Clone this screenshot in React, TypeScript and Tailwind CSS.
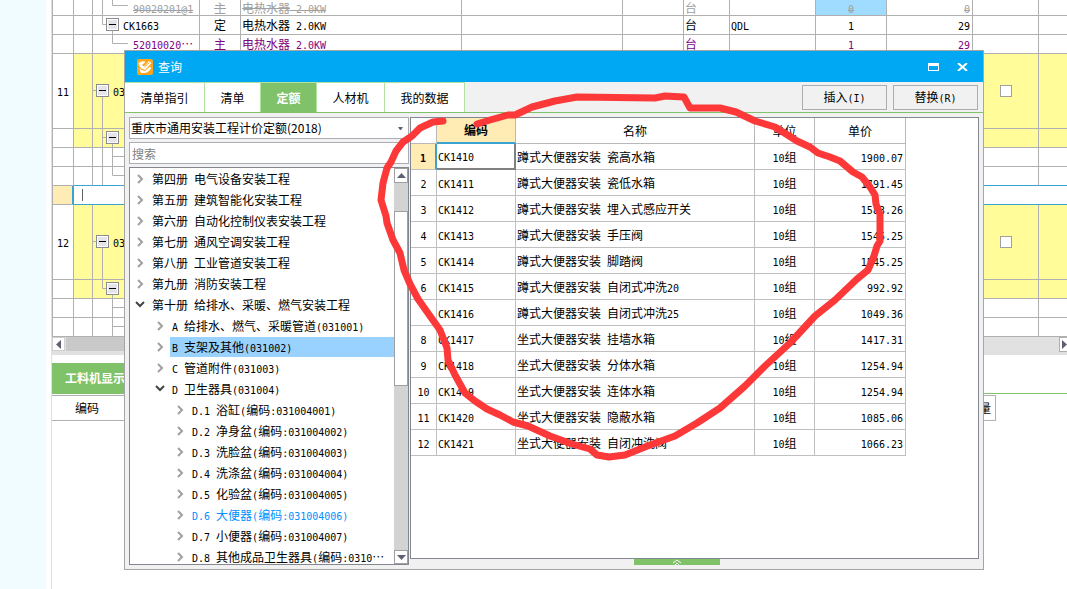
import { useState } from 'react';

interface GridRow {
  no?: string;
  height: string;
  filled?: boolean;
  editing?: boolean;
  tone?: 'muted' | 'material';
  lines?: string;
  box?: [number, number];
  indent?: string;
  code?: string;
  kind?: string;
  name?: string;
  unit?: string;
  formula?: string;
  qty?: string;
  total?: string;
  checkable?: boolean;
}

const GRID_COLS = [
  'w-[21px]',
  'w-[19px]',
  'w-[107px]',
  'w-[41px]',
  'w-[221px]',
  'w-[161px]',
  'w-[61px]',
  'w-[46px]',
  'w-[86px]',
  'w-[71px]',
  'w-[86px]',
  'w-[66px]',
  '',
];

const GRID_ROWS: GridRow[] = [
  {
    height: 'h-4',
    tone: 'muted',
    lines: 'M9.5 0V15M19.5 0V5.5H35',
    indent: 'pl-10',
    code: '90020201@1',
    kind: '主',
    name: '电热水器 2.0KW',
    unit: '台',
    qty: '0',
    total: '0',
  },
  {
    height: 'h-[19px]',
    lines: 'M9.5 0V8.5H13M19.5 15V18',
    box: [13, 2],
    indent: 'pl-[30px]',
    code: 'CK1663',
    kind: '定',
    name: '电热水器 2.0KW',
    unit: '台',
    formula: 'QDL',
    qty: '1',
    total: '29',
  },
  {
    height: 'h-[19px]',
    tone: 'material',
    lines: 'M19.5 0V8.5H35',
    indent: 'pl-10',
    code: '52010020…',
    kind: '主',
    name: '电热水器 2.0KW',
    unit: '台',
    qty: '1',
    total: '29',
  },
  {
    no: '11',
    height: 'h-[75px]',
    filled: true,
    lines: 'M0 36.5H3M9.5 43V74',
    box: [3, 30],
    indent: 'pl-5',
    code: '03',
    checkable: true,
  },
  { height: 'h-[19px]', filled: true, lines: 'M9.5 0V18M9.5 8.5H13M19.5 15V18', box: [13, 2] },
  { height: 'h-[19px]', lines: 'M9.5 0V18M19.5 0V18M19.5 8.5H60' },
  { height: 'h-[19px]', lines: 'M9.5 0V18M19.5 0V8.5H60' },
  { height: 'h-[19px]', editing: true },
  {
    no: '12',
    height: 'h-[75px]',
    filled: true,
    lines: 'M0 36.5H3M9.5 43V74',
    box: [3, 30],
    indent: 'pl-5',
    code: '03',
    checkable: true,
  },
  { height: 'h-[19px]', filled: true, lines: 'M9.5 0V8.5H13M19.5 15V18', box: [13, 2] },
  { height: 'h-[19px]', lines: 'M19.5 0V18M19.5 8.5H60' },
  { height: 'h-[19px]', lines: 'M19.5 0V18M19.5 8.5H60' },
];

const TABS = [
  { label: '清单指引', width: 'w-20' },
  { label: '清单', width: 'w-14' },
  { label: '定额', width: 'w-14' },
  { label: '人材机', width: 'w-[68px]' },
  { label: '我的数据', width: 'w-20' },
];

interface TreeNode {
  level: 0 | 1 | 2;
  label: string;
  open?: boolean;
  selected?: boolean;
  active?: boolean;
}

const TREE: TreeNode[] = [
  { level: 0, label: '第四册 电气设备安装工程' },
  { level: 0, label: '第五册 建筑智能化安装工程' },
  { level: 0, label: '第六册 自动化控制仪表安装工程' },
  { level: 0, label: '第七册 通风空调安装工程' },
  { level: 0, label: '第八册 工业管道安装工程' },
  { level: 0, label: '第九册 消防安装工程' },
  { level: 0, label: '第十册 给排水、采暖、燃气安装工程', open: true },
  { level: 1, label: 'A 给排水、燃气、采暖管道(031001)' },
  { level: 1, label: 'B 支架及其他(031002)', selected: true },
  { level: 1, label: 'C 管道附件(031003)' },
  { level: 1, label: 'D 卫生器具(031004)', open: true },
  { level: 2, label: 'D.1 浴缸(编码:031004001)' },
  { level: 2, label: 'D.2 净身盆(编码:031004002)' },
  { level: 2, label: 'D.3 洗脸盆(编码:031004003)' },
  { level: 2, label: 'D.4 洗涤盆(编码:031004004)' },
  { level: 2, label: 'D.5 化验盆(编码:031004005)' },
  { level: 2, label: 'D.6 大便器(编码:031004006)', active: true },
  { level: 2, label: 'D.7 小便器(编码:031004007)' },
  { level: 2, label: 'D.8 其他成品卫生器具(编码:0310…' },
];

const INDENTS = ['pl-1', 'pl-6', 'pl-11'];

const QUOTAS = [
  ['CK1410', '蹲式大便器安装 瓷高水箱', '1900.07'],
  ['CK1411', '蹲式大便器安装 瓷低水箱', '1791.45'],
  ['CK1412', '蹲式大便器安装 埋入式感应开关', '1583.26'],
  ['CK1413', '蹲式大便器安装 手压阀', '1545.25'],
  ['CK1414', '蹲式大便器安装 脚踏阀', '1545.25'],
  ['CK1415', '蹲式大便器安装 自闭式冲洗20', '992.92'],
  ['CK1416', '蹲式大便器安装 自闭式冲洗25', '1049.36'],
  ['CK1417', '坐式大便器安装 挂墙水箱', '1417.31'],
  ['CK1418', '坐式大便器安装 分体水箱', '1254.94'],
  ['CK1419', '坐式大便器安装 连体水箱', '1254.94'],
  ['CK1420', '坐式大便器安装 隐蔽水箱', '1085.06'],
  ['CK1421', '坐式大便器安装 自闭冲洗阀', '1066.23'],
];

// Latin runs are half the width of a Chinese character
function Txt({ children, struck }: { children: string; struck?: boolean }) {
  const parts = children.split(/([\x20-\x7e]+)/).filter(Boolean);
  return (
    <>
      {parts.map((part, i) =>
        /^[\x20-\x7e]/.test(part) ? (
          <span
            key={i}
            className={`font-['DejaVu_Sans_Mono',monospace] text-[10px] leading-none whitespace-pre ${
              struck ? 'line-through' : ''
            }`}
          >
            {part}
          </span>
        ) : (
          <span key={i} className={struck ? 'line-through' : ''}>
            {part}
          </span>
        ),
      )}
    </>
  );
}

function TreeLines({ lines, box }: { lines: string; box?: [number, number] }) {
  return (
    <svg width="106" height="18" className="absolute top-0 left-0 overflow-visible">
      <path d={lines} fill="none" stroke="#b0b0b0" />
      {box && (
        <g transform={`translate(${box[0]} ${box[1]})`}>
          <rect x="0.5" y="0.5" width="12" height="12" fill="#e4e4ea" stroke="#8c8c8c" />
          <rect x="1.5" y="1.5" width="10" height="10" fill="none" stroke="#fff" />
          <path d="M3 6.5H10" stroke="#000" />
        </g>
      )}
    </svg>
  );
}

function Triangle({ dir }: { dir: 'up' | 'down' | 'left' | 'right' }) {
  const d = {
    up: 'M0 7L4.500 2L9 7Z',
    down: 'M0 2L4.500 7L9 2Z',
    left: 'M7 0L2 4.500L7 9Z',
    right: 'M2 0L7 4.500L2 9Z',
  }[dir];
  return (
    <svg width="9" height="9" viewBox="0 0 9 9" className="shrink-0">
      <path d={d} fill="#5f6172" />
    </svg>
  );
}

function ProjectGrid() {
  return (
    <table className="w-full table-fixed border-separate border-spacing-0 border-l border-[#b0b0b0] leading-[14px]">
      <colgroup>
        {GRID_COLS.map((w, i) => (
          <col key={i} className={w} />
        ))}
      </colgroup>
      <tbody>
        {GRID_ROWS.map((row, r) => {
          const struck = row.tone === 'muted';
          const tone = struck
            ? 'text-[#a0a0a0]'
            : row.tone === 'material'
              ? 'text-[#800080]'
              : 'text-black';
          const blue = row.editing || GRID_ROWS[r + 1]?.editing;
          const line = `border-b whitespace-nowrap overflow-hidden p-0 ${
            blue ? 'border-b-[#3ba3d0]' : 'border-b-[#b0b0b0]'
          } ${row.editing ? '' : 'border-r border-r-[#b0b0b0]'} ${row.filled ? 'bg-[#fffc99]' : ''}`;
          return (
            <tr key={r} className={`${row.height} ${tone}`}>
              <td
                className={`border-b border-b-[#b0b0b0] p-0 text-center ${
                  row.editing
                    ? 'bg-[#ffecb5] border-r-2 border-r-[#3ba3d0]'
                    : 'border-r border-r-[#b0b0b0]'
                }`}
              >
                {row.no && <Txt>{row.no}</Txt>}
              </td>
              <td className={line}>
                {row.editing && <div className="ml-2 h-3 border-l border-[#606060]" />}
              </td>
              <td className={`${line} relative ${row.indent ?? ''}`}>
                {row.lines && <TreeLines lines={row.lines} box={row.box} />}
                {row.code && <Txt struck={struck}>{row.code}</Txt>}
              </td>
              <td className={`${line} text-center`}>
                {row.kind && <Txt struck={struck}>{row.kind}</Txt>}
              </td>
              <td className={`${line} pl-px`}>
                {row.name && <Txt struck={struck}>{row.name}</Txt>}
              </td>
              <td className={line} />
              <td className={line} />
              <td className={`${line} pl-px`}>{row.unit && <Txt>{row.unit}</Txt>}</td>
              <td className={`${line} pl-px`}>{row.formula && <Txt>{row.formula}</Txt>}</td>
              <td className={`${line} text-center ${r === 0 ? 'bg-[#9fdcff]' : ''}`}>
                {row.qty && <Txt struck={struck}>{row.qty}</Txt>}
              </td>
              <td className={`${line} pr-[2px] text-right`}>
                {row.total && <Txt struck={struck}>{row.total}</Txt>}
              </td>
              <td className={`${line} text-center`}>
                {row.checkable && (
                  <input
                    type="checkbox"
                    aria-label={`选择第${row.no}行`}
                    className="block mx-auto w-3 h-3 appearance-none border border-[#a0a0a0] bg-white checked:bg-[#3ba3d0]"
                  />
                )}
              </td>
              <td className={`${line} border-r-0`} />
            </tr>
          );
        })}
      </tbody>
    </table>
  );
}

function DetailPane() {
  return (
    <>
      <div className="h-[18px] flex items-start justify-between bg-[#e1e1e1]">
        <button
          type="button"
          aria-label="向左滚动"
          className="w-[13px] h-[14px] flex items-center justify-center bg-white border border-[#d0d0d0]"
        >
          <Triangle dir="left" />
        </button>
        <div className="w-[740px] h-[14px] ml-px mr-auto bg-[#c9c9c9]" />
        <button
          type="button"
          aria-label="向右滚动"
          className="w-2 h-[15px] flex items-center overflow-hidden bg-white border-l border-y border-[#b0b0b0]"
        >
          <Triangle dir="right" />
        </button>
      </div>
      <div className="mt-2 border-b border-[#7fc269]">
        <button type="button" className="h-[30px] w-[100px] pl-[13px] text-left font-bold text-white bg-[#7fc269]">
          工料机显示
        </button>
      </div>
      <table className="w-[944px] table-fixed border-separate border-spacing-0 mt-px text-black">
        <thead>
          <tr className="h-[26px]">
            <th className="w-[100px] p-0 pr-[30px] font-normal text-center border-y border-[#b0b0b0]">
              编码
            </th>
            <th className="p-0 pr-1 font-normal text-right border-y border-r border-[#b0b0b0]">
              数量
            </th>
          </tr>
        </thead>
      </table>
    </>
  );
}

function CatalogTree() {
  return (
    <div className="flex-1 min-h-0 flex border border-[#828790] bg-white">
      <ul className="flex-1 min-w-0 h-[396px] overflow-hidden">
        {TREE.map((node) => (
          <li key={node.label} className={`flex h-[21px] items-center ${INDENTS[node.level]}`}>
            <svg width="12" height="12" viewBox="0 0 12 12" className="shrink-0 mr-1">
              {node.open ? (
                <path d="M2 3L6 7L10 3" fill="none" stroke="#444" strokeWidth="2" />
              ) : (
                <path d="M4 2L8 6L4 10" fill="none" stroke="#a0a0a0" strokeWidth="2" />
              )}
            </svg>
            <button
              type="button"
              className={`flex-1 h-5 pl-[2px] text-left whitespace-nowrap ${
                node.selected ? 'bg-[#99d1ff]' : ''
              } ${node.active ? 'text-[#0090ff]' : 'text-black'}`}
            >
              <Txt>{node.label}</Txt>
            </button>
          </li>
        ))}
      </ul>
      <div className="w-[14px] flex flex-col bg-[#d3d3d3]">
        <button
          type="button"
          aria-label="向上滚动"
          className="h-[15px] flex items-center justify-center border border-[#a0a0a0] bg-white"
        >
          <Triangle dir="up" />
        </button>
        <div className="h-[175px] mt-7 border border-[#a0a0a0] bg-white" />
        <button
          type="button"
          aria-label="向下滚动"
          className="h-[14px] mt-auto flex items-center justify-center border border-[#a0a0a0] bg-white"
        >
          <Triangle dir="down" />
        </button>
      </div>
    </div>
  );
}

function QuotaTable() {
  const head = 'p-0 font-normal text-center border-r border-b border-[#b8b8b8]';
  const cell = 'p-0 border-r border-b border-[#c0c0c0]';
  return (
    <table className="w-[495px] table-fixed border-separate border-spacing-0">
      <colgroup>
        <col className="w-[26px]" />
        <col className="w-[79px]" />
        <col className="w-[239px]" />
        <col className="w-[60px]" />
        <col className="w-[91px]" />
      </colgroup>
      <thead>
        <tr className="h-[26px]">
          <th className={head} />
          <th className="p-0 font-bold text-center bg-[#ffecb5] border-r border-r-[#b8b8b8] border-b-2 border-b-[#3ba3d0]">
            编码
          </th>
          <th className={head}>名称</th>
          <th className={head}>单位</th>
          <th className={head}>单价</th>
        </tr>
      </thead>
      <tbody>
        {QUOTAS.map(([code, name, price], i) => (
          <tr key={code} className="h-[26px]">
            <td
              className={`p-0 text-center border-b border-b-[#c0c0c0] ${
                i === 0
                  ? 'font-bold bg-[#ffecb5] border-r-2 border-r-[#3ba3d0]'
                  : 'border-r border-r-[#c0c0c0]'
              }`}
            >
              {i !== 6 && <Txt>{String(i + 1)}</Txt>}
            </td>
            <td
              className={
                i === 0 ? 'p-0 pl-px border-r-2 border-b-2 border-[#808080]' : `${cell} pl-px`
              }
            >
              <Txt>{code}</Txt>
            </td>
            <td className={`${cell} pl-px`}>
              <Txt>{name}</Txt>
            </td>
            <td className={`${cell} text-center`}>
              <Txt>10组</Txt>
            </td>
            <td className={`${cell} pr-[2px] text-right`}>
              <Txt>{price}</Txt>
            </td>
          </tr>
        ))}
      </tbody>
    </table>
  );
}

function QueryDialog() {
  const [tab, setTab] = useState('定额');
  return (
    <section
      aria-label="查询"
      className="absolute top-[50px] left-[124px] right-[83px] flex flex-col border border-[#a6a6a6] bg-[#f1f1f1] text-black"
    >
      <header className="h-[31px] flex items-center pl-3 pr-[15px] bg-[#00a8f3] text-white">
        <svg width="16" height="16" viewBox="0 0 16 16" className="mr-[5px]">
          <rect width="16" height="16" rx="2" fill="#fba51c" />
          <path
            d="M1.500 4.500C3.500 2 7 1.500 8.500 3L5 6L7 7.500L12 2L14.500 4L8 11L4.500 9.500L3 8Z"
            fill="#fff"
          />
          <path d="M2 9L4.500 11L8 12L13 7.500L14 9C13 12 10 14.500 4 14Z" fill="#fff" />
          <path d="M7.500 8L12.500 3.500" fill="none" stroke="#fba51c" />
        </svg>
        <h1 className="text-xs">查询</h1>
        <div className="ml-auto flex items-center gap-[18px]">
          <button type="button" aria-label="最大化">
            <svg width="11" height="8" viewBox="0 0 11 8" className="block">
              <path d="M0 0H11V8H0ZM1 3V7H10V3Z" fill="#fff" fillRule="evenodd" />
            </svg>
          </button>
          <button type="button" aria-label="关闭">
            <svg width="11" height="8" viewBox="0 0 11 8" className="block">
              <path d="M1 0L10 8M10 0L1 8" stroke="#fff" strokeWidth="2" />
            </svg>
          </button>
        </div>
      </header>

      <div className="h-[31px] flex items-stretch border-b border-[#7fc269]">
        {TABS.map(({ label, width }) => (
          <button
            key={label}
            type="button"
            onClick={() => setTab(label)}
            className={`${width} border-r border-t border-[#b0e3a0] ${
              tab === label ? 'bg-[#7fc269] font-bold text-white' : 'bg-white'
            }`}
          >
            {label}
          </button>
        ))}
        <div className="ml-auto mr-[5px] flex items-center gap-[6px]">
          <button type="button" className="w-[85px] h-[25px] border border-[#adadad]">
            <Txt>插入(I)</Txt>
          </button>
          <button type="button" className="w-[85px] h-[25px] border border-[#adadad]">
            <Txt>替换(R)</Txt>
          </button>
        </div>
      </div>

      <div className="flex gap-px pt-1 pb-1 px-1">
        <div className="w-[280px] shrink-0 flex flex-col gap-[3px]">
          <div className="relative">
            <select
              aria-label="定额库"
              className="block w-full h-[22px] px-px appearance-none border border-[#abadb3] bg-white"
            >
              <option>重庆市通用安装工程计价定额(2018)</option>
            </select>
            <svg width="5" height="3" className="absolute right-[6px] top-[10px] pointer-events-none">
              <path d="M0 0H5L3 3H2Z" fill="#5f6172" />
            </svg>
          </div>
          <input
            type="text"
            aria-label="搜索"
            placeholder="搜索"
            className="h-[22px] px-[2px] border border-[#abadb3] bg-white placeholder:text-[#808080]"
          />
          <CatalogTree />
        </div>
        <div className="flex-1 min-w-0 flex flex-col">
          <div className="flex-1 border border-[#828790] bg-white">
            <QuotaTable />
          </div>
          <button
            type="button"
            aria-label="展开"
            className="w-[86px] h-[6px] ml-56 flex justify-center bg-[#7fc269]"
          >
            <svg width="10" height="6" viewBox="0 0 10 6">
              <path d="M1 4L5 1L9 4M3 6L5 4L7 6" fill="none" stroke="#fff" />
            </svg>
          </button>
        </div>
      </div>
    </section>
  );
}

function Annotation() {
  return (
    <svg width="1067" height="589" className="absolute top-0 left-0 pointer-events-none">
      <path
        d="M443 121L433 122L420 128L412 136L403 142L396 151L391 162L387 168L383 183L381 200L386 216L387 223L393 240L400 253L404 270L410 284L418 299L430 316L440 330L447 348L448 360L455 375L465 393L475 401L487 409L500 415L513 422L528 426L550 436L572 444L590 449L597 455L609 457L625 455L650 445L675 436L697 423L720 408L745 386L765 366L790 343L815 316L835 300L857 279L868 270L874 256L877 246L880 241L880 214L876 204L875 195L870 187L862 177L853 172L840 161L830 157L818 153L810 147L797 141L775 127L755 121L736 112L720 108L690 108L684 97L665 96L655 98L577 97L555 101L532 107L515 115L508 115L490 120L477 124"
        fill="none"
        stroke="#fc3838"
        strokeWidth="7"
        strokeLinecap="round"
        strokeLinejoin="round"
      />
    </svg>
  );
}

export default function App() {
  return (
    <div
      lang="zh-CN"
      className="relative min-h-screen flex overflow-hidden bg-white text-xs font-['Noto_Sans_CJK_SC',sans-serif]"
    >
      <aside className="w-[46px] shrink-0 bg-[#f0fcff]" />
      <main className="flex-1 min-w-0 ml-[5px] border-l border-[#e0e0e0]">
        <ProjectGrid />
        <DetailPane />
      </main>
      <QueryDialog />
      <Annotation />
    </div>
  );
}
